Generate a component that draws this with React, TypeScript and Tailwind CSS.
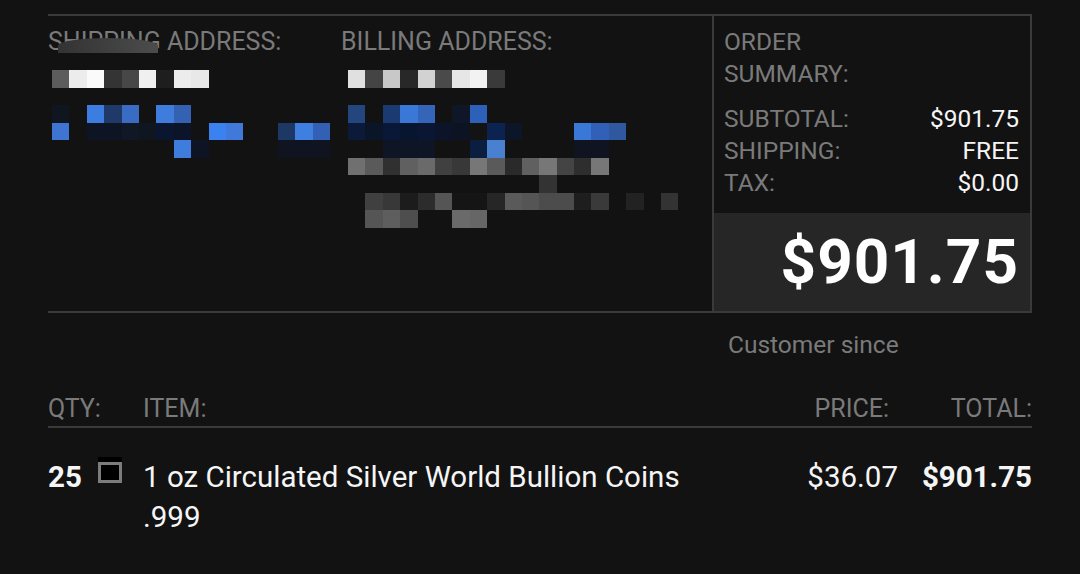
import React from 'react';

// 打码区域：每行是一串颜色，'' 表示背景
const BG = '';

const shippingMosaic: string[][] = [
  ['#5c5c5c', '#ececec', '#fafafa', '#343434', '#474747', '#f0f0f0', '#1e1e1e', '#ececec', '#e8e8e8'],
  [],
  ['#0f1620', BG, '#3b7de0', '#1f3a68', '#3a6cc4', BG, '#3f7ddc', '#3461b2'],
  ['#3f74d2', BG, '#0d1424', '#0d1424', '#101826', '#101620', '#0a1630', '#0b1428', BG, '#3b82f0', '#4079d9', BG, BG, '#1e3866', '#3f7fe0', '#3360b4'],
  [BG, BG, BG, BG, BG, BG, BG, '#3f7ddc', '#0e1424', BG, BG, BG, BG, '#0f1420', '#0f1420', '#0f1420'],
];

const billingMosaic: string[][] = [
  ['#e0e0e0', '#444444', '#c8c8c8', '#282828', '#d2d2d2', '#4a4a4a', '#e6e6e6', '#f2f2f2', '#3a3a3a'],
  [],
  ['#23467e', BG, '#1b3a72', '#3a78d8', '#3565b8', BG, '#0e1628', '#2d60b8'],
  ['#0a1a38', '#0b1528', '#0a1838', '#08152e', '#0a1632', '#0b1428', '#0c1424', '#131313', '#0c2350', '#0c1628', BG, BG, BG, '#3a78d8', '#3060b8', '#3058a0'],
  [BG, BG, '#0e1626', '#0e1626', '#0e1626', BG, BG, '#0c1e40', '#4a80d0', BG, BG, BG, BG, '#0f1420', '#0f1420'],
  ['#707070', '#5a5a5a', '#303030', '#606060', '#6a6a6a', '#404040', '#383838', '#777777', '#5a5a5a', '#2a2a2a', '#606060', '#777777', '#444444', '#2e2e2e', '#777777'],
  [BG, BG, BG, BG, BG, BG, BG, BG, BG, BG, BG, '#333333'],
  [BG, '#404040', '#383838', '#1c1c1c', '#2c2c2c', '#555555', '#151515', '#151515', '#262626', '#5a5a5a', '#555555', '#4c4c4c', '#4c4c4c', '#1e1e1e', '#3a3a3a', BG, '#222222', BG, '#333333'],
  [BG, '#555555', '#5e5e5e', '#4e4e4e', BG, BG, '#6a6a6a', '#666666'],
];

function Mosaic({ rows }: { rows: string[][] }) {
  return (
    <div className="flex flex-col">
      {rows.map((row, r) => (
        <div key={r} className="flex h-[17.5px]">
          {row.map((c, i) => (
            <div key={i} className="w-[17.4px] h-full" style={{ backgroundColor: c || 'transparent' }} />
          ))}
        </div>
      ))}
    </div>
  );
}

export default function App() {
  return (
    <div className="min-h-[574px] bg-[#121212] px-[48px] pt-[14px] text-[#f5f5f5]" style={{ fontFamily: 'Roboto, "Liberation Sans", sans-serif' }}>
      {/* 地址 + 订单汇总 */}
      <div className="flex border-t-2 border-b-2 border-[#3a3a3a]">
        <div className="flex flex-1">
          <div className="w-[293px] pt-[10px]">
            <div className="relative text-[25px] leading-[31px] text-[#7a7a7a]">
              SHIPPING ADDRESS:
              <div className="absolute left-[10px] top-[12px] h-[15px] w-[100px] rounded-t-[60%] bg-gradient-to-r from-[#333333] to-[#4c4c4c]" />
            </div>
            <div className="mt-[13px] ml-[4px]">
              <Mosaic rows={shippingMosaic} />
            </div>
          </div>
          <div className="flex-1 pt-[10px]">
            <div className="text-[25px] leading-[31px] text-[#7a7a7a]">BILLING ADDRESS:</div>
            <div className="mt-[13px] ml-[7px] mb-[16px]">
              <Mosaic rows={billingMosaic} />
            </div>
          </div>
        </div>

        <div className="flex w-[320px] flex-col border-l-2 border-r-2 border-[#3a3a3a]">
          <div className="pl-[10px] pr-[11px] pt-[10px] text-[24.5px] leading-[32px]">
            <div className="text-[#7a7a7a]">ORDER<br />SUMMARY:</div>
            <div className="mt-[13px] flex justify-between">
              <span className="text-[#7a7a7a]">SUBTOTAL:</span>
              <span>$901.75</span>
            </div>
            <div className="flex justify-between">
              <span className="text-[#7a7a7a]">SHIPPING:</span>
              <span>FREE</span>
            </div>
            <div className="flex justify-between">
              <span className="text-[#7a7a7a]">TAX:</span>
              <span>$0.00</span>
            </div>
          </div>
          <div className="mt-[14px] flex h-[98px] items-center justify-end bg-[#262626] pr-[11px]">
            <span className="text-[62px] font-bold leading-none tracking-[1px] text-white">$901.75</span>
          </div>
        </div>
      </div>

      <div className="flex justify-end">
        <div className="w-[320px] pl-[16px] pt-[16px] text-[24.5px] leading-[32px] text-[#7a7a7a]">Customer since</div>
      </div>

      {/* 商品表 */}
      <div className="mt-[32px] flex border-b-2 border-[#3a3a3a] pb-[2px] text-[25px] leading-[31px] text-[#7a7a7a]">
        <div className="w-[95px]">QTY:</div>
        <div className="flex-1">ITEM:</div>
        <div className="text-right">PRICE:</div>
        <div className="w-[143px] text-right">TOTAL:</div>
      </div>

      <div className="flex pt-[29px] text-[29.5px] leading-[40px]">
        <div className="flex w-[95px] items-start gap-[16px]">
          <span className="font-bold">25</span>
          <div className="flex h-[26px] w-[24px] flex-col bg-black pt-[5px]">
            <div className="h-[21px] w-full border-[3px] border-[#7c7c7c] bg-black" />
          </div>
        </div>
        <div className="flex-1">1 oz Circulated Silver World Bullion Coins<br />.999</div>
        <div className="text-right">$36.07</div>
        <div className="w-[134px] text-right font-bold">$901.75</div>
      </div>
    </div>
  );
}
